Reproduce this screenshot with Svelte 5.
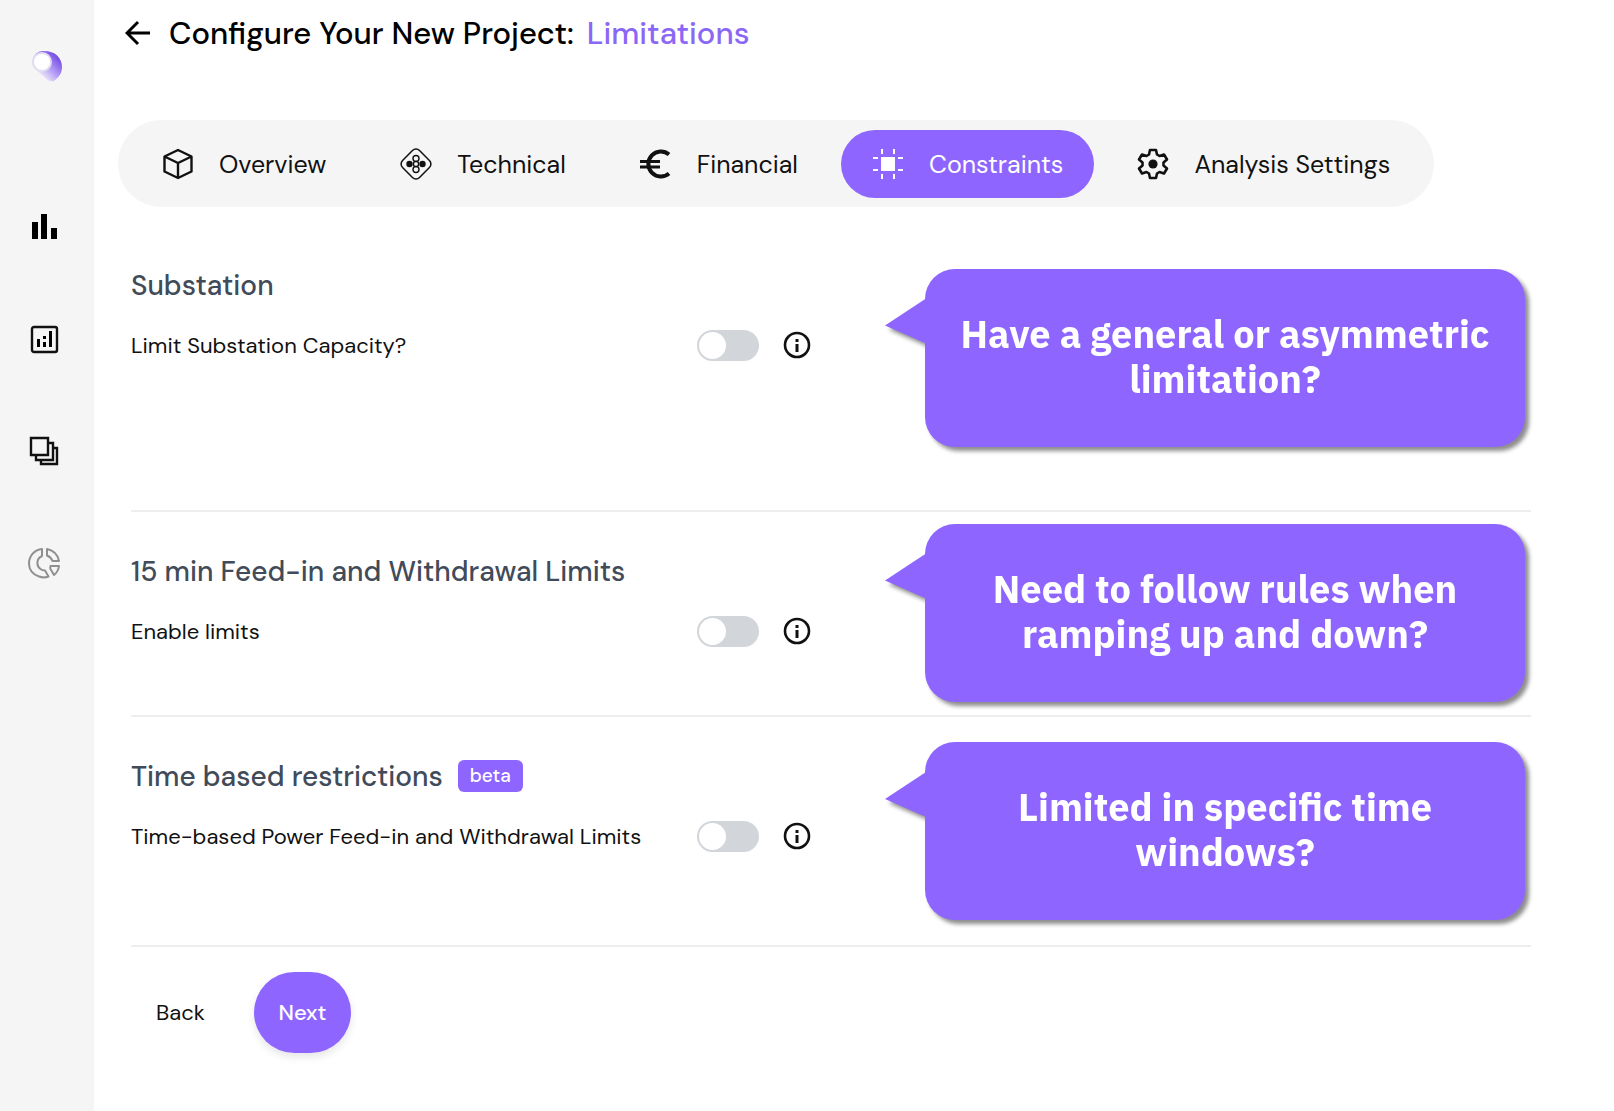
<script lang="ts">
  type Section = {
    id: string;
    title: string;
    label: string;
    hint: string;
    size: "large" | "small" | "medium";
    beta?: boolean;
  };

  const tabs = [
    { id: "overview", label: "Overview" },
    { id: "technical", label: "Technical" },
    { id: "financial", label: "Financial" },
    { id: "constraints", label: "Constraints" },
    { id: "settings", label: "Analysis Settings" },
  ];

  const sections: Section[] = [
    {
      id: "substation",
      title: "Substation",
      label: "Limit Substation Capacity?",
      hint: "Have a general or asymmetric limitation?",
      size: "large",
    },
    {
      id: "ramping",
      title: "15 min Feed-in and Withdrawal Limits",
      label: "Enable limits",
      hint: "Need to follow rules when ramping up and down?",
      size: "small",
    },
    {
      id: "time-based",
      title: "Time based restrictions",
      label: "Time-based Power Feed-in and Withdrawal Limits",
      hint: "Limited in specific time windows?",
      size: "medium",
      beta: true,
    },
  ];

  let activeTab = $state("constraints");
  let enabled: Record<string, boolean> = $state({});
</script>

<div class="layout">
  <nav class="sidebar" aria-label="Main">
    <a class="logo" href="#home" aria-label="Home">
      <svg width="38" height="32" viewBox="0 0 38 32">
        <defs>
          <linearGradient id="moon" x1="0.8" y1="0.1" x2="0.15" y2="0.75">
            <stop offset="0" stop-color="#7248e2" />
            <stop offset="0.45" stop-color="#ab92f4" />
            <stop offset="1" stop-color="#f5f3fa" />
          </linearGradient>
        </defs>
        <path d="M14 1C26 0 34 7 34 17c0 7-4 11-8 14-4 1-7-1-10-4L6 18C2 12 5 2 14 1z" fill="url(#moon)" />
        <circle cx="14" cy="12" r="10" fill="#e2dcf3" />
        <circle cx="14" cy="12" r="8" fill="#fff" />
      </svg>
    </a>
    <a href="#dashboard" aria-label="Dashboard">
      <svg width="32" height="32" viewBox="0 0 32 32">
        <path d="M4 11h6v17H4zM13 3h6v25h-6zM23 17h6v11h-6z" />
      </svg>
    </a>
    <a href="#analytics" aria-label="Analytics">
      <svg width="32" height="32" viewBox="0 0 32 32">
        <rect x="4" y="4" width="25" height="25" rx="2" fill="none" stroke="#111" stroke-width="2.4" />
        <path d="M9 16h3v8H9zM15 13h3v3h-3zM15 19h3v5h-3zM21 8h3v16h-3z" />
      </svg>
    </a>
    <a href="#projects" aria-label="Projects">
      <svg width="32" height="32" viewBox="0 0 32 32" fill="none" stroke="#111" stroke-width="2.4">
        <path d="M3 3h17v17H3zM20 8h5v17H8v-5M25 13h4v16H13v-4" />
      </svg>
    </a>
    <a href="#reports" aria-label="Reports">
      <svg width="32" height="32" viewBox="0 0 32 32" fill="none" stroke="#909090" stroke-width="2" stroke-linejoin="round">
        <path d="M14 2v7a7.500 7.500 0 0 0-1.500 13c1.500 1.200 3 1.400 4.500 1.500l3.500 6c-3 1.200-6 1.200-9.500 0C4 27 1 22 1 16.500 1 9 6.500 2.700 14 2z" />
        <path d="M19 2C25.500 3.500 30 8 31 14h-6.500c-.8-2.500-2.500-4.300-5.500-5.500z" />
        <path d="M22.500 19H31c-.5 4-2.500 7-5 9l-3.500-6c-.5-1-.3-2 0-3z" />
      </svg>
    </a>
  </nav>

  <main class="content">
    <header class="header">
      <button class="icon-button" aria-label="Go back">
        <svg width="26" height="26" viewBox="0 0 26 26" fill="none" stroke="#000" stroke-width="3">
          <path d="M25 13H3M13 2 2 13l11 11" />
        </svg>
      </button>
      <h1>Configure Your New Project: <span>Limitations</span></h1>
    </header>

    <div class="tabs" role="tablist">
      {#each tabs as tab}
        <button
          class="tab"
          class:active={activeTab === tab.id}
          role="tab"
          aria-selected={activeTab === tab.id}
          onclick={() => (activeTab = tab.id)}
        >
          <svg width="32" height="32" viewBox="0 0 32 32" fill="none" stroke="currentColor">
            {#if tab.id === "overview"}
              <path d="M16 2 29.500 8.500v15L16 30 2.500 23.500v-15zM2.500 8.500 16 15l13.500-6.500M16 15v15" stroke-width="2.400" stroke-linejoin="round" />
            {:else if tab.id === "technical"}
              <rect x="4" y="4" width="24" height="24" rx="5" transform="rotate(45 16 16)" stroke-width="1.500" />
              <g stroke-width="1.400">
                <circle cx="16" cy="10.500" r="3" />
                <circle cx="16" cy="21.500" r="3" />
                <circle cx="16" cy="16" r="2.600" />
                <circle cx="9.500" cy="16" r="2.500" fill="currentColor" />
                <circle cx="22.500" cy="16" r="2.500" fill="currentColor" />
              </g>
            {:else if tab.id === "financial"}
              <path d="M29 6.500A12.500 12.500 0 1 0 29 25.500" stroke-width="4" />
              <path d="M0 13.500h20M0 19h20" stroke-width="3.200" />
            {:else if tab.id === "constraints"}
              <path d="M9 9h14v14H9z" fill="currentColor" stroke="none" />
              <path d="M10 1v5M22 1v5M10 26v5M22 26v5M1 10h5M1 22h5M26 10h5M26 22h5" stroke-width="2" />
            {:else}
              <path d="M13 2h6l1 4.500 2.500 1.500 4.500-1.500 3 5-3.500 3v3l3.500 3-3 5-4.500-1.500L20 25.500 19 30h-6l-1-4.500L9.500 24 5 25.500l-3-5 3.500-3v-3L2 11.500l3-5L9.500 8 12 6.500z" stroke-width="2.600" stroke-linejoin="round" />
              <circle cx="16" cy="16" r="4.600" fill="currentColor" stroke="none" />
            {/if}
          </svg>
          {tab.label}
        </button>
      {/each}
    </div>

    {#each sections as section}
      <section class="section {section.size}">
        <div class="settings">
          <h2>
            {section.title}
            {#if section.beta}<span class="badge">beta</span>{/if}
          </h2>
          <div class="row">
            <label for={section.id}>{section.label}</label>
            <input id={section.id} class="toggle" type="checkbox" role="switch" bind:checked={enabled[section.id]} />
            <button class="icon-button" aria-label="More about {section.title}">
              <svg width="28" height="28" viewBox="0 0 28 28">
                <circle cx="14" cy="14" r="12" fill="none" stroke="#111" stroke-width="2.600" />
                <path d="M12.500 8h3v3h-3zM12.500 13h3v8h-3z" fill="#111" />
              </svg>
            </button>
          </div>
        </div>
        <p class="callout">{section.hint}</p>
      </section>
    {/each}

    <footer class="footer">
      <button class="back">Back</button>
      <button class="next">Next</button>
    </footer>
  </main>
</div>

<style>
  :global(body) {
    background: #fff;
    font-family: "DM Sans", Inter, sans-serif;
    color: #111;
  }

  .layout {
    display: flex;
    min-height: 100vh;
  }

  .sidebar {
    box-sizing: border-box;
    width: 94px;
    flex-shrink: 0;
    padding: 50px 0 0 28px;
    background: #f5f5f5;
    display: flex;
    flex-direction: column;
    align-items: flex-start;
    gap: 80px;
  }

  .sidebar a {
    display: flex;
  }

  .sidebar .logo {
    margin-bottom: 49px;
  }

  .content {
    flex: 1;
    min-width: 0;
    padding: 10px 83px 32px 37px;
  }

  button {
    border: none;
    background: none;
    padding: 0;
    font: inherit;
    color: inherit;
    cursor: pointer;
  }

  .icon-button {
    display: flex;
  }

  .header {
    display: flex;
    align-items: center;
    gap: 18px;
    height: 46px;
    margin-left: -6px;
  }

  h1 {
    margin: 0;
    font-size: 31px;
    font-weight: 500;
    color: #000;
  }

  h1 span {
    margin-left: 5px;
    color: #8b67f5;
  }

  .tabs {
    box-sizing: border-box;
    display: flex;
    gap: 12px;
    width: fit-content;
    height: 87px;
    margin: 64px 0 0 -13px;
    padding: 10px 13px 9px;
    border-radius: 44px;
    background: #f5f5f5;
  }

  .tab {
    display: flex;
    align-items: center;
    gap: 25px;
    padding: 0 31px;
    border-radius: 34px;
    font-size: 25px;
    white-space: nowrap;
  }

  .tab.active {
    background: #8e66ff;
    color: #fff;
  }

  .section {
    display: grid;
    grid-template-columns: 1fr 600px;
    align-items: center;
    box-sizing: border-box;
    padding-right: 6px;
    border-bottom: 2px solid #eee;
  }

  .large {
    min-height: 305px;
    padding-bottom: 2px;
  }

  .small {
    min-height: 205px;
    padding-bottom: 2px;
  }

  .medium {
    min-height: 230px;
  }

  .settings {
    align-self: start;
    padding-top: 40px;
  }

  .large .settings {
    padding-top: 59px;
  }

  h2 {
    display: flex;
    align-items: center;
    gap: 15px;
    height: 38px;
    margin: 0;
    font-size: 28px;
    font-weight: 500;
    color: #414b59;
  }

  .badge {
    padding: 0 12px;
    border-radius: 6px;
    background: #8e66ff;
    color: #fff;
    font-size: 19px;
    line-height: 32px;
  }

  .row {
    display: flex;
    align-items: center;
    height: 32px;
    margin-top: 25px;
    font-size: 22px;
  }

  .row label {
    width: 566px;
  }

  .toggle {
    appearance: none;
    width: 62px;
    height: 31px;
    margin: 0 24px 0 0;
    border-radius: 16px;
    background: #d2d5da;
    cursor: pointer;
  }

  .toggle::before {
    content: "";
    display: block;
    width: 27px;
    height: 27px;
    margin: 2px;
    border-radius: 50%;
    background: #fff;
  }

  .toggle:checked {
    background: #8e66ff;
  }

  .toggle:checked::before {
    margin-left: 33px;
  }

  .callout {
    position: relative;
    box-sizing: border-box;
    display: flex;
    align-items: center;
    justify-content: center;
    height: 178px;
    margin: 0;
    padding: 0 28px 4px;
    border-radius: 30px;
    background: #8e66ff;
    color: #fff;
    filter: drop-shadow(4px 4px 2px rgba(0, 0, 0, 0.45));
    font-family: "IBM Plex Sans", "Noto Sans", sans-serif;
    font-size: 38px;
    font-weight: 700;
    line-height: 45px;
    text-align: center;
  }

  .callout::before {
    content: "";
    position: absolute;
    top: 30px;
    left: -40px;
    width: 41px;
    height: 45px;
    background: #8e66ff;
    clip-path: polygon(0 60%, 100% 0, 100% 100%);
  }

  .footer {
    display: flex;
    align-items: center;
    gap: 49px;
    padding: 25px 0 0 25px;
    font-size: 22px;
  }

  .next {
    width: 97px;
    height: 81px;
    border-radius: 41px;
    background: #8e66ff;
    color: #fff;
    font-weight: 500;
    box-shadow: 0 4px 8px rgba(0, 0, 0, 0.1);
  }
</style>
